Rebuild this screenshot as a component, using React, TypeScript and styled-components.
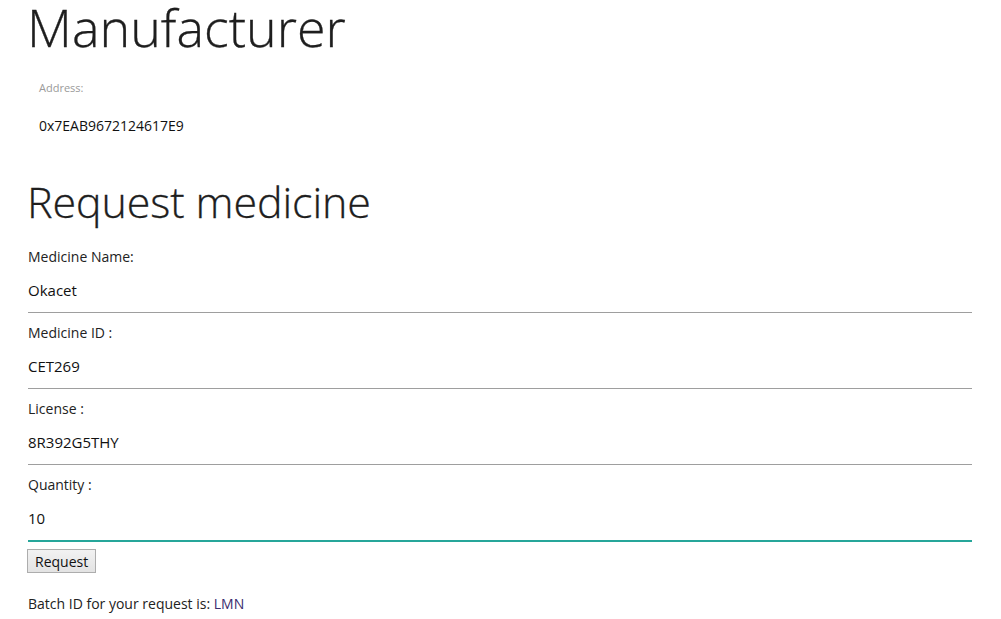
import React from "react";
import styled, { createGlobalStyle } from "styled-components";

const Global = createGlobalStyle`
  html, body { margin: 0; padding: 0; background: #fff; }
  body { font-family: "Open Sans", "Noto Sans", sans-serif; color: #212529; }
  * { box-sizing: border-box; }
`;

const Page = styled.div`
  padding: 0 29px 0 28px;
  display: flex;
  flex-direction: column;
`;

const Title = styled.h1<{ $size: number; $lh: number; $top: number; $ls: number }>`
  margin: ${(p) => p.$top}px 0 0 -1px;
  font-weight: 300;
  font-size: ${(p) => p.$size}px;
  line-height: ${(p) => p.$lh}px;
  letter-spacing: ${(p) => p.$ls}px;
  color: #1e1e1e;
  -webkit-text-stroke: 0.3px #1e1e1e;
`;

const AddressBox = styled.div`
  padding: 26px 11px 0;
  display: flex;
  flex-direction: column;
  gap: 20px;
`;

const SmallLabel = styled.span`
  font-size: 11px;
  color: #9a9a9a;
  line-height: 16px;
`;

const AddressValue = styled.span`
  font-size: 14px;
  line-height: 20px;
  color: #111;
`;

const Form = styled.form`
  display: flex;
  flex-direction: column;
  margin-top: 9px;
`;

const Field = styled.label`
  display: flex;
  flex-direction: column;
  padding-top: 10px;
`;

const FieldLabel = styled.span`
  font-size: 14px;
  line-height: 20px;
  color: #222;
`;

const Input = styled.input<{ $active?: boolean }>`
  height: ${(p) => (p.$active ? 47 : 46)}px;
  border: none;
  border-bottom: ${(p) => (p.$active ? "2px solid #26a69a" : "1px solid #9e9e9e")};
  outline: none;
  padding: 0;
  font-family: inherit;
  font-size: 15px;
  color: #111;
  caret-color: #000;
  background: transparent;
`;

const Button = styled.button`
  align-self: flex-start;
  margin: 7px 0 0 -1px;
  height: 24px;
  padding: 0 7px;
  font-family: inherit;
  font-size: 14px;
  color: #111;
  background: linear-gradient(#f2f2f2, #e3e3e3);
  border: 1px solid #adadad;
  border-radius: 0;
`;

const Result = styled.p`
  margin: 21px 0 0;
  font-size: 14px;
  line-height: 20px;
  color: #222;
`;

const Accent = styled.span`
  color: #3b2c6e;
`;

export default function App() {
  return (
    <>
      <Global />
      <Page>
        <Title $size={52} $lh={54} $top={0} $ls={0}>Manufacturer</Title>
        <AddressBox>
          <SmallLabel>Address:</SmallLabel>
          <AddressValue>0x7EAB9672124617E9</AddressValue>
        </AddressBox>
        <Title $size={43} $lh={52} $top={40} $ls={-0.1}>Request medicine</Title>
        <Form onSubmit={(e) => e.preventDefault()}>
          <Field>
            <FieldLabel>Medicine Name:</FieldLabel>
            <Input defaultValue="Okacet" />
          </Field>
          <Field>
            <FieldLabel>Medicine ID :</FieldLabel>
            <Input defaultValue="CET269" />
          </Field>
          <Field>
            <FieldLabel>License :</FieldLabel>
            <Input defaultValue="8R392G5THY" />
          </Field>
          <Field>
            <FieldLabel>Quantity :</FieldLabel>
            <Input defaultValue="10" $active autoFocus />
          </Field>
          <Button type="submit">Request</Button>
        </Form>
        <Result>
          Batch ID for your request is: <Accent>LMN</Accent>
        </Result>
      </Page>
    </>
  );
}
